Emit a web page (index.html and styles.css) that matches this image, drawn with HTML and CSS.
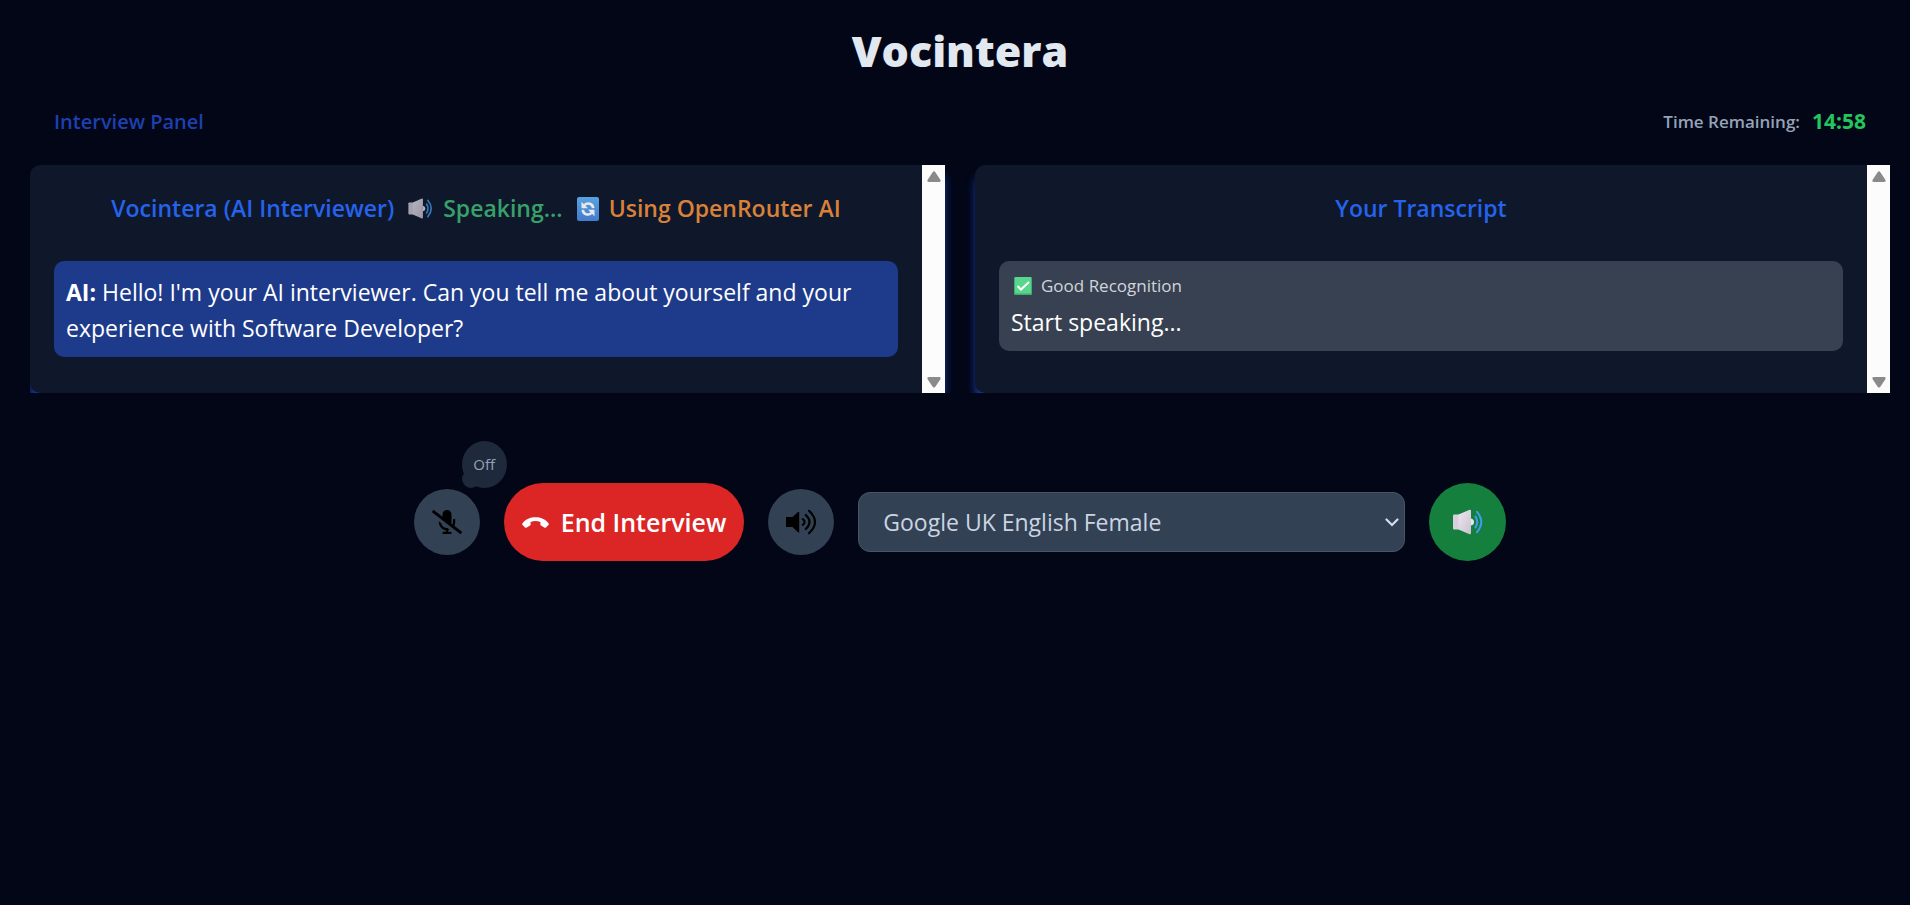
FILE: index.html
```html
<!DOCTYPE html>
<html lang="en">
<head>
<meta charset="utf-8">
<meta name="viewport" content="width=device-width, initial-scale=1">
<title>Vocintera</title>
<link rel="stylesheet" href="styles.css">
</head>
<body>
<svg class="defs" aria-hidden="true">
  <defs>
    <linearGradient id="cone" x1="0" y1="0" x2="1" y2="1">
      <stop offset="0" stop-color="#eee8f2"/><stop offset="1" stop-color="#c9c0cf"/>
    </linearGradient>
    <linearGradient id="tile" x1="0" y1="0" x2="0" y2="1">
      <stop offset="0" stop-color="#5fb2f5"/><stop offset="1" stop-color="#4a86e0"/>
    </linearGradient>
  </defs>
  <symbol id="loud" viewBox="0 0 30 26">
    <path d="M1 5.500h5v15H1q-1 0-1-1v-13q0-1 1-1z" fill="#d8d0de"/>
    <path d="M5.500 5.500 16 1q2-.8 2 1v22q0 1.800-2 1L5.500 20.500z" fill="url(#cone)"/>
    <path d="M18 9.500q3 .5 3 3.500t-3 3.500z" fill="#e9e3ef"/>
    <path d="M22.500 7.500q3.500 5.500 0 11M24 2.800q8.500 10.200 0 20.400" fill="none" stroke="#3f9bf0" stroke-width="2" stroke-linecap="round"/>
  </symbol>
  <symbol id="up" viewBox="0 0 14 12"><path d="M5.500 1.500Q7-.8 8.500 1.500l4.700 7q1.300 2.500-1.200 2.500H2Q-.5 11 .8 8.500z" fill="#8a8a8a"/></symbol>
</svg>

<header class="brand"><h1 class="brand-name">Vocintera</h1></header>

<main class="page">
  <div class="status">
    <h2 class="status-title">Interview Panel</h2>
    <p class="timer"><span class="timer-label">Time Remaining:</span><span class="timer-value">14:58</span></p>
  </div>

  <div class="panels">
    <section class="panel">
      <div class="panel-body">
        <h3 class="panel-title">
          <span>Vocintera (AI Interviewer)</span>
          <span class="state speaking"><svg class="loud-small"><use href="#loud"/></svg>Speaking...</span>
          <span class="state provider"><svg class="tile" viewBox="0 0 22 24"><rect width="22" height="24" rx="2" fill="url(#tile)"/><path d="M7.500 8.200A5 5 0 0 1 16.200 11.200M14.500 15.800A5 5 0 0 1 5.800 12.800" fill="none" stroke="#fff" stroke-width="2.600"/><path d="M4.500 4.800v6.400H11zM17.500 19.200v-6.400H11z" fill="#fff"/></svg>Using OpenRouter AI</span>
        </h3>
        <p class="message ai"><strong>AI:</strong> Hello! I'm your AI interviewer. Can you tell me about yourself and your experience with Software Developer?</p>
      </div>
      <div class="scrollbar" aria-hidden="true"><svg class="arrow"><use href="#up"/></svg><svg class="arrow down"><use href="#up"/></svg></div>
    </section>
    <section class="panel">
      <div class="panel-body">
        <h3 class="panel-title">Your Transcript</h3>
        <div class="message user">
          <p class="quality"><svg class="check" viewBox="0 0 18 18"><rect width="18" height="18" rx="1" fill="#3fae72"/><rect x="1" y="0" width="16" height="16.500" rx="1" fill="#57d68c"/><path d="M3.500 9 7 12.500 15 5" fill="none" stroke="#fff" stroke-width="2"/></svg>Good Recognition</p>
          <p class="speech">Start speaking...</p>
        </div>
      </div>
      <div class="scrollbar" aria-hidden="true"><svg class="arrow"><use href="#up"/></svg><svg class="arrow down"><use href="#up"/></svg></div>
    </section>
  </div>

  <div class="controls">
    <div class="mic">
      <button class="round" type="button" aria-label="Microphone"><svg class="mic-icon" viewBox="0 0 640 512"><path d="M633.820 458.100l-157.800-121.960C488.610 312.130 496 285.010 496 256v-48c0-8.840-7.160-16-16-16h-16c-8.840 0-16 7.160-16 16v48c0 17.920-3.960 34.800-10.720 50.200l-26.550-20.520c3.100-9.400 5.280-19.220 5.280-29.670V96c0-53.020-42.980-96-96-96s-96 42.980-96 96v45.360L45.470 3.370C38.490-2.050 28.430-.8 23.010 6.180L3.370 31.450C-2.050 38.420-.8 48.470 6.180 53.900l588.350 454.730c6.980 5.430 17.030 4.170 22.460-2.810l19.640-25.270c5.420-6.970 4.170-17.020-2.810-22.450zM400 464h-56v-33.770c11.660-1.600 22.850-4.540 33.670-8.310l-50.110-38.730c-6.710.4-13.410.87-20.350.2-55.850-5.450-98.740-48.630-111.180-101.850L144 241.310v6.850c0 89.640 63.970 169.550 152 181.690V464h-56c-8.840 0-16 7.160-16 16v16c0 8.840 7.160 16 16 16h160c8.840 0 16-7.160 16-16v-16c0-8.840-7.160-16-16-16z"/></svg></button>
      <span class="bubble">Off</span>
    </div>
    <button class="end" type="button"><svg class="phone" viewBox="0 0 27 11"><path d="M.6 6.200C6.500-1.700 20.500-1.700 26.400 6.200q.8 1 0 1.800L24 10.400q-.8.700-1.800.1l-3.200-2q-.8-.5-.7-1.400l.2-2.100Q13.500 3.200 8.500 5l.2 2.100q.1.900-.7 1.400l-3.200 2q-1 .6-1.800-.1L.6 8q-.8-.8 0-1.800z" fill="#fff"/></svg>End Interview</button>
    <button class="round" type="button" aria-label="Sound"><svg class="sound" viewBox="0 0 30 26"><path d="M0 8h6.500L12 3q1.200-1 1.200.7v19q0 1.500-1.200.5L6.500 18H0z"/><g fill="none" stroke="#000" stroke-width="2.200" stroke-linecap="round"><path d="M16.800 10.200q3.600 2.800 0 5.600M19.800 6q7.400 7 0 14M23 1.800q12 11.200 0 22.400"/></g></svg></button>
    <label class="voice">
      <select class="voice-select" aria-label="Voice"><option>Google UK English Female</option></select>
      <svg class="chevron" viewBox="0 0 14 9"><path d="M1.500 1.500 7 7l5.500-5.500" fill="none" stroke="#d5dde8" stroke-width="2.200" stroke-linecap="round"/></svg>
    </label>
    <button class="test" type="button" aria-label="Test voice"><svg class="loud-large"><use href="#loud"/></svg></button>
  </div>
</main>
</body>
</html>
```
FILE: styles.css
```css
* { box-sizing: border-box; }

body {
  margin: 0;
  min-height: 100vh;
  background: #020617;
  color: #fff;
  font-family: "Segoe UI", "Open Sans", "Noto Sans", sans-serif;
}

h1, h2, h3, p { margin: 0; }
button { border: 0; padding: 0; font-family: inherit; cursor: pointer; }
svg { display: block; flex: none; }
.defs { position: absolute; width: 0; height: 0; }

.brand { padding: 23px 20px 0 30px; text-align: center; }
.brand-name { font-size: 43px; font-weight: 800; line-height: 56px; color: #e2e8f0; }

.page { padding: 24px 20px 0 30px; }

.status {
  display: flex;
  align-items: center;
  justify-content: space-between;
  height: 36px;
  padding: 0 24px;
}
.status-title { font-size: 20px; font-weight: 600; color: #1e40af; }
.timer { display: flex; align-items: center; gap: 12px; }
.timer-label { font-size: 17px; font-weight: 600; color: #94a3b8; }
.timer-value { font-size: 21px; font-weight: 700; color: #22c55e; }

.panels {
  display: grid;
  grid-template-columns: 1fr 1fr;
  gap: 30px;
  margin-top: 26px;
  overflow: hidden;
}
.panel {
  display: flex;
  min-height: 228px;
  border-radius: 10px 0 0 10px;
  background: #0f172a;
  box-shadow: 0 10px 10px -1px #1e40af;
}
.panel-body { flex: 1; min-width: 0; padding: 24px 24px 34px; }
.panel-title {
  display: flex;
  justify-content: center;
  gap: 14px;
  margin-bottom: 33px;
  font-size: 23px;
  font-weight: 600;
  line-height: 39px;
  color: #2563eb;
}
.state { display: flex; align-items: center; gap: 10px; }
.speaking { color: #38a169; }
.provider { color: #d9813a; }
.loud-small { width: 25px; height: 21px; opacity: .75; }
.tile { width: 22px; height: 24px; opacity: .9; }

.message { border-radius: 10px; font-size: 23px; line-height: 36px; }
.ai { padding: 13px 12px 11px; background: #1e3a8a; }
.user { padding: 7px 12px 11px; background: #374151; }
.quality {
  display: flex;
  align-items: center;
  gap: 9px;
  padding-left: 3px;
  font-size: 17px;
  color: #d1d5db;
}
.check { width: 18px; height: 18px; }

.scrollbar {
  display: flex;
  flex-direction: column;
  justify-content: space-between;
  align-items: center;
  width: 23px;
  padding: 6px 0 5px;
  background: #fcfcfc;
}
.arrow { width: 14px; height: 12px; }
.down { transform: rotate(180deg); }

.controls {
  display: flex;
  align-items: center;
  justify-content: center;
  gap: 24px;
  margin-top: 90px;
}
.round {
  display: grid;
  place-items: center;
  width: 66px;
  height: 66px;
  border-radius: 50%;
  background: #334155;
}
.mic { position: relative; }
.mic-icon { width: 30px; height: 24px; }
.sound { width: 30px; height: 26px; }
.bubble {
  position: absolute;
  left: 48px;
  bottom: 67px;
  width: 45px;
  border-radius: 50%;
  background: #1e293b;
  font-size: 15px;
  line-height: 47px;
  text-align: center;
  color: #94a3b8;
}
.bubble::before {
  content: "";
  position: absolute;
  left: 0;
  bottom: 0;
  width: 18px;
  height: 18px;
  border-radius: 50%;
  background: #1e293b;
}
.end {
  display: flex;
  align-items: center;
  gap: 12px;
  height: 78px;
  padding: 0 18px;
  border-radius: 39px;
  background: #dc2626;
  color: #fff;
  font-size: 25px;
  font-weight: 600;
}
.phone { width: 27px; height: 11px; }
.voice { position: relative; flex: 0 1 547px; }
.voice-select {
  display: block;
  appearance: none;
  width: 100%;
  height: 60px;
  padding: 0 24px;
  border: 1px solid #475569;
  border-radius: 12px;
  background: #334155;
  color: #cbd5e1;
  font-family: inherit;
  font-size: 23px;
}
.chevron { position: absolute; right: 6px; top: 26px; width: 14px; height: 9px; pointer-events: none; }
.test {
  display: grid;
  place-items: center;
  width: 77px;
  height: 78px;
  border-radius: 50%;
  background: #15803d;
}
.loud-large { width: 30px; height: 26px; }
```
